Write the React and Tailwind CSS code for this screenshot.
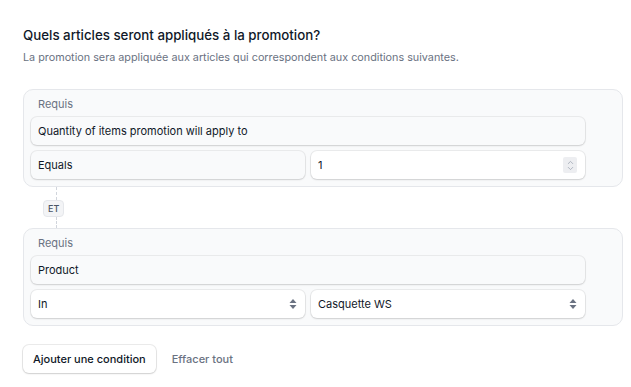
import { ChevronUp, ChevronDown } from "lucide-react";

function SortIcon() {
  return (
    <svg width="8" height="12" viewBox="0 0 8 12" className="text-gray-500">
      <path d="M4 1 L7.5 5 H0.5 Z" fill="currentColor" />
      <path d="M4 11 L7.5 7 H0.5 Z" fill="currentColor" />
    </svg>
  );
}

function Field({ children, white, right, grow }) {
  return (
    <div
      className={`flex h-[28px] items-center justify-between rounded-md pl-[7px] pr-[8px] text-[11px] text-gray-900 shadow-[0_0_0_1px_rgba(0,0,0,0.06),0_1px_2px_rgba(0,0,0,0.12)] ${
        white ? "bg-white" : "bg-[#f9fafb]"
      } ${grow ? "flex-1" : "w-full"}`}
    >
      <span>{children}</span>
      {right}
    </div>
  );
}

function Condition({ attribute, operator, value, valueRight, operatorRight }) {
  return (
    <div className="rounded-[10px] border border-[#e5e7eb] bg-[#f9fafb] pb-[7px] pl-[7px] pr-[37px] pt-[8px]">
      <p className="px-[7px] pb-[6px] text-[11px] leading-[13px] text-gray-500">Requis</p>
      <div className="flex flex-col gap-[6px]">
        <Field>{attribute}</Field>
        <div className="flex gap-[6px]">
          <Field grow white={!!operatorRight} right={operatorRight}>
            {operator}
          </Field>
          <Field grow white right={valueRight}>
            {value}
          </Field>
        </div>
      </div>
    </div>
  );
}

export default function App() {
  return (
    <div className="min-h-screen bg-white pl-[23px] pr-[8px] pt-[26px] font-['Inter',sans-serif]">
      <h2 className="text-[13.3px] font-medium leading-[18px] text-gray-900">
        Quels articles seront appliqués à la promotion?
      </h2>
      <p className="mt-[7px] text-[10.8px] leading-[14px] text-gray-500">
        La promotion sera appliquée aux articles qui correspondent aux conditions suivantes.
      </p>

      <div className="mt-[24px]">
        <Condition
          attribute="Quantity of items promotion will apply to"
          operator="Equals"
          value="1"
          valueRight={
            <span className="flex h-[16px] w-[14px] flex-col items-center justify-center rounded-[2px] bg-gray-200/70 text-gray-400">
              <ChevronUp size={9} strokeWidth={2} />
              <ChevronDown size={9} strokeWidth={2} className="-mt-[3px]" />
            </span>
          }
        />

        <div className="flex h-[41px] flex-col items-start pl-[20px]">
          <div className="ml-[13px] h-[13px] border-l border-dashed border-gray-300" />
          <span className="rounded-[4px] border border-gray-200 bg-gray-100 px-[4px] py-px text-[9px] font-medium leading-[13px] text-gray-600">
            ET
          </span>
          <div className="ml-[13px] flex-1 border-l border-dashed border-gray-300" />
        </div>

        <Condition
          attribute="Product"
          operator="In"
          operatorRight={<SortIcon />}
          value="Casquette WS"
          valueRight={<SortIcon />}
        />
      </div>

      <div className="mt-[19px] flex items-center gap-[16px]">
        <button className="h-[28px] rounded-md bg-white px-[10px] text-[11px] font-medium text-gray-900 shadow-[0_0_0_1px_rgba(0,0,0,0.08),0_1px_2px_rgba(0,0,0,0.12)]">
          Ajouter une condition
        </button>
        <button className="text-[11px] font-medium text-gray-500">Effacer tout</button>
      </div>
    </div>
  );
}
